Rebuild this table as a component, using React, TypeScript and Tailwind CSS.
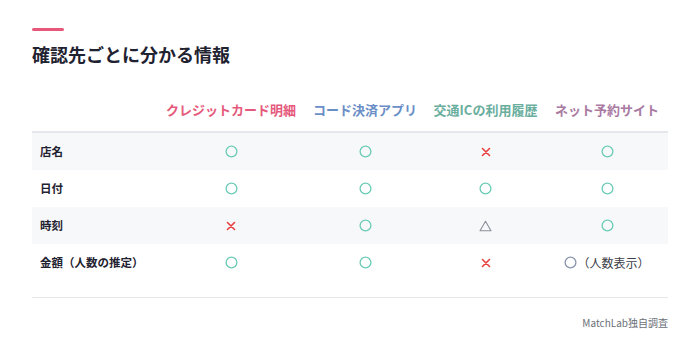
import React from "react";

type Mark = "o" | "x" | "t" | "note";

const headers = [
  { label: "クレジットカード明細", color: "text-[#e55a7c]" },
  { label: "コード決済アプリ", color: "text-[#6a8ec6]" },
  { label: "交通ICの利用履歴", color: "text-[#6aae9e]" },
  { label: "ネット予約サイト", color: "text-[#a97aa2]" },
];

const rows: { label: string; marks: Mark[] }[] = [
  { label: "店名", marks: ["o", "o", "x", "o"] },
  { label: "日付", marks: ["o", "o", "o", "o"] },
  { label: "時刻", marks: ["x", "o", "t", "o"] },
  { label: "金額（人数の推定）", marks: ["o", "o", "x", "note"] },
];

const Circle = ({ color = "#6ccbb6" }: { color?: string }) => (
  <svg width="13" height="13" viewBox="0 0 13 13">
    <circle cx="6.5" cy="6.5" r="5.4" fill="none" stroke={color} strokeWidth="1.3" />
  </svg>
);

const Cross = () => (
  <svg width="10" height="10" viewBox="0 0 10 10">
    <path d="M1.5 1.5 L8.5 8.5 M8.5 1.5 L1.5 8.5" stroke="#e8403f" strokeWidth="1.6" strokeLinecap="round" />
  </svg>
);

const Triangle = () => (
  <svg width="13" height="12" viewBox="0 0 13 12">
    <path d="M6.5 1.2 L12 10.8 L1 10.8 Z" fill="none" stroke="#8b909a" strokeWidth="1.1" strokeLinejoin="round" />
  </svg>
);

const MarkCell = ({ mark }: { mark: Mark }) => {
  if (mark === "o") return <Circle />;
  if (mark === "x") return <Cross />;
  if (mark === "t") return <Triangle />;
  return (
    <span className="flex items-center text-[12px] text-[#3c4048]">
      <Circle color="#8794ab" />
      <span>（人数表示）</span>
    </span>
  );
};

const App: React.FC = () => {
  return (
    <div
      className="w-[700px] h-[359px] bg-white px-8 pt-7"
      style={{ fontFamily: '"Noto Sans CJK JP", "Noto Sans", sans-serif' }}
    >
      <div className="w-8 h-[3px] bg-[#e8567a] rounded-full" />
      <h2 className="mt-[10px] text-[18px] leading-[26px] font-bold text-[#1f2230]">
        確認先ごとに分かる情報
      </h2>

      <div className="mt-[28px] grid grid-cols-[125px_148px_120px_121px_122px] border-b-2 border-[#e6e7eb] h-[38px] items-center">
        <div />
        {headers.map((h) => (
          <div key={h.label} className={`text-center text-[13px] font-bold ${h.color} pb-[6px]`}>
            {h.label}
          </div>
        ))}
      </div>

      {rows.map((r, i) => (
        <div
          key={r.label}
          className={`grid grid-cols-[125px_148px_120px_121px_122px] h-[37px] items-center ${
            i % 2 === 0 ? "bg-[#f7f8fa]" : "bg-white"
          }`}
        >
          <div className="pl-2 text-[11.5px] font-bold text-[#1f2230]">{r.label}</div>
          {r.marks.map((m, j) => (
            <div key={j} className="flex justify-center items-center">
              <MarkCell mark={m} />
            </div>
          ))}
        </div>
      ))}

      <div className="mt-4 border-t border-[#e6e7eb]" />
      <div className="mt-[17px] text-right text-[10px] text-[#6b6f78]">MatchLab独自調査</div>
    </div>
  );
};

export default App;
